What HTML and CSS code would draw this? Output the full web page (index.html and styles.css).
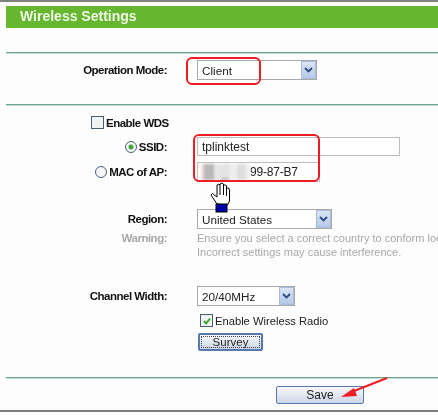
FILE: index.html
```html
<!DOCTYPE html>
<html lang="en">
<head>
    <meta charset="UTF-8">
    <title>Wireless Settings</title>
    <link rel="stylesheet" href="styles.css">
</head>
<body>
    <div class="page">
        <div class="panel">
            <h1 class="title">Wireless Settings</h1>

            <div class="section section-mode">
                <div class="row">
                    <label class="label">Operation Mode:</label>
                    <div class="select select-mode"><span>Client</span><i class="arrow"><svg width="9" height="6" viewBox="0 0 9 6"><path d="M1 1l3.500 3.500L8 1" fill="none" stroke="#2a4a80" stroke-width="1.800"/></svg></i></div>
                </div>
            </div>

            <div class="section section-main">
                <div class="wds"><span class="check"></span><b>Enable WDS</b></div>

                <div class="row row-ssid">
                    <label class="label"><span class="radio on"></span>SSID:</label>
                    <div class="input input-ssid">tplinktest</div>
                </div>
                <div class="row row-mac">
                    <label class="label"><span class="radio"></span>MAC of AP:</label>
                    <div class="input input-mac">
                        <span class="blur">
                            <i class="b1"></i><i class="b2"></i><i class="b3"></i><i class="b4"></i><i class="b5"></i><i class="b6"></i><i class="b7"></i>
                        </span>99-87-B7
                    </div>
                </div>

                <div class="row row-region">
                    <label class="label">Region:</label>
                    <div class="select select-region"><span>United States</span><i class="arrow"><svg width="9" height="6" viewBox="0 0 9 6"><path d="M1 1l3.500 3.500L8 1" fill="none" stroke="#2a4a80" stroke-width="1.800"/></svg></i></div>
                </div>
                <div class="row row-warning">
                    <label class="label muted">Warning:</label>
                    <p class="note">Ensure you select a correct country to conform local law.<br>Incorrect settings may cause interference.</p>
                </div>

                <div class="row row-channel">
                    <label class="label">Channel Width:</label>
                    <div class="select select-channel"><span>20/40MHz</span><i class="arrow"><svg width="9" height="6" viewBox="0 0 9 6"><path d="M1 1l3.500 3.500L8 1" fill="none" stroke="#2a4a80" stroke-width="1.800"/></svg></i></div>
                </div>
                <div class="radio-line">
                    <span class="check checked"><svg width="10" height="10" viewBox="0 0 10 10"><path d="M2 5l2.200 2.500L8 2.500" fill="none" stroke="#3fa535" stroke-width="2"/></svg></span>Enable Wireless Radio
                </div>
                <button class="btn btn-survey"><span>Survey</span></button>
            </div>

            <div class="section footer">
                <button class="btn btn-save">Save</button>
            </div>
        </div>
        <div class="page-end"></div>

        <div class="mark mark-mode"></div>
        <div class="mark mark-ssid"></div>

        <svg class="hand" width="22" height="31" viewBox="0 0 22 31">
            <path d="M7 22L1 13l1.500-1.500L7 15V3l2-1 1 1v-1l2-1 1.500 1v1l2 0 1 1v2l2 0 1 2v11l-2 4z" fill="#fff" stroke="#000" stroke-width="1"/>
            <path d="M10 3v10M13.500 3v10M16.500 5v9" stroke="#000" stroke-width="1" fill="none"/>
            <rect x="6" y="22" width="11" height="8" fill="#0000a8" stroke="#000" stroke-width="1"/>
        </svg>

        <svg class="pointer" width="48" height="24" viewBox="0 0 48 24">
            <path d="M46 1L8 16" stroke="#ee1c25" stroke-width="2" fill="none"/>
            <path d="M0 20l13-9 3 8z" fill="#ee1c25"/>
        </svg>
    </div>
</body>
</html>
```

FILE: styles.css
```css
* {
    margin: 0;
    padding: 0;
    box-sizing: border-box;
}

body {
    font-family: "Liberation Sans", Arial, sans-serif;
    font-size: 11px;
    color: #222;
    background-color: #fff;
    overflow: hidden;
}

.page {
    position: relative;
    width: 438px;
    height: 415px;
    border-top: 2px solid #808080;
    overflow: hidden;
    filter: blur(0.3px);
    background-color: #fdfdfd;
}

.panel {
    margin-left: 6px;
    height: 408px;
    padding-top: 4px;
}

.page-end {
    height: 2px;
    background-color: #808080;
}

.title {
    height: 22px;
    padding-left: 14px;
    font-size: 14px;
    line-height: 20px;
    color: #eef7e6;
    background-color: #67b630;
}

.section {
    border-top: 1px solid #6fa392;
    box-shadow: inset 0 1px 0 #c5dcd3;
}

.section-mode {
    height: 52px;
    margin-top: 24px;
    padding-top: 7px;
}

.section-main {
    height: 273px;
    padding-top: 11px;
}

.row {
    display: grid;
    grid-template-columns: 161px auto;
    column-gap: 30px;
    align-items: center;
}

.label {
    display: flex;
    justify-content: flex-end;
    align-items: center;
    font-size: 11.500px;
    letter-spacing: -0.5px;
    font-weight: bold;
    color: #111;
}

.muted {
    color: #a8a8a8;
}

.select {
    display: flex;
    justify-content: space-between;
    align-items: center;
    height: 20px;
    padding-left: 4px;
    border: 1px solid #a9a9a9;
    background-color: #fff;
    font-size: 11.700px;
}

.select-mode {
    width: 120px;
}

.select-region {
    width: 135px;
}

.select-channel {
    width: 98px;
}

.arrow {
    display: flex;
    justify-content: center;
    align-items: center;
    width: 15px;
    height: 18px;
    background: linear-gradient(#dbe5f5, #b4c8e8);
    border: 1px solid #a9bcd9;
}

.wds {
    display: flex;
    align-items: center;
    gap: 2px;
    height: 13px;
    margin-left: 85px;
    font-size: 11.500px;
    letter-spacing: -0.5px;
    color: #111;
}

.check {
    display: flex;
    justify-content: center;
    align-items: center;
    width: 13px;
    height: 13px;
    background-color: #f2f2f2;
    border: 1px solid #4b5f73;
}

.radio {
    width: 12px;
    height: 12px;
    margin-right: 2px;
    border: 1px solid #4b5f73;
    border-radius: 50%;
    background-color: #f4f6f8;
}

.radio.on {
    background: radial-gradient(circle, #3fa535 0 2px, #f4f6f8 3px);
}

.input {
    display: flex;
    align-items: center;
    height: 19px;
    padding-left: 4px;
    background-color: #fff;
    border: 1px solid #bdbdbd;
    font-size: 12px;
}

.input-ssid {
    width: 203px;
}

.input-mac {
    width: 123px;
    height: 20px;
    padding-left: 3px;
    letter-spacing: -0.2px;
}

.row-ssid {
    margin-top: 8px;
}

.row-mac {
    margin-top: 6px;
}

.blur {
    display: flex;
    height: 16px;
    filter: blur(1px);
}

.blur i {
    display: block;
}

.b1 {
    width: 3px;
    background-color: #f3d9d9;
}

.b2 {
    width: 10px;
    background-color: #b8b8b8;
}

.b3 {
    width: 7px;
    background-color: #e6e6e6;
}

.b4 {
    width: 8px;
    background: linear-gradient(#e4e4e4 85%, #b8b8b8 85%);
}

.b5 {
    width: 8px;
    background-color: #eeeeee;
}

.b6 {
    width: 8px;
    background-color: #dedede;
}

.b7 {
    width: 5px;
    background-color: #f0ecee;
}

.row-region {
    margin-top: 27px;
}

.row-warning {
    align-items: start;
    margin-top: 2px;
}

.row-warning .label {
    line-height: 14px;
}

.note {
    color: #a8a8a8;
    line-height: 14px;
    white-space: nowrap;
}

.row-channel {
    margin-top: 27px;
}

.radio-line {
    display: flex;
    align-items: center;
    gap: 2px;
    height: 13px;
    margin: 8px 0 0 194px;
    font-size: 11.200px;
}

.btn {
    display: block;
    font-family: inherit;
    color: #222;
    background: linear-gradient(#f8f9fc, #cbd5e6);
    border: 1px solid #5878b0;
    border-radius: 2px;
}

.btn-survey {
    width: 65px;
    height: 18px;
    margin: 6px 0 0 192px;
    padding: 1px;
    font-size: 11.500px;
    border-width: 2px;
}

.btn-survey span {
    display: block;
    height: 12px;
    line-height: 10px;
    border: 1px dotted #444;
}

.footer {
    height: 32px;
    padding: 8px 0 0 270px;
}

.btn-save {
    width: 88px;
    height: 18px;
    font-size: 12px;
}

.mark {
    position: absolute;
    border: 2px solid #ee1c25;
    border-radius: 6px;
}

.mark-mode {
    left: 186px;
    top: 55px;
    width: 75px;
    height: 28px;
}

.mark-ssid {
    left: 193px;
    top: 132px;
    width: 127px;
    height: 48px;
}

.hand {
    position: absolute;
    left: 210px;
    top: 180px;
}

.pointer {
    position: absolute;
    left: 341px;
    top: 375px;
}
```
